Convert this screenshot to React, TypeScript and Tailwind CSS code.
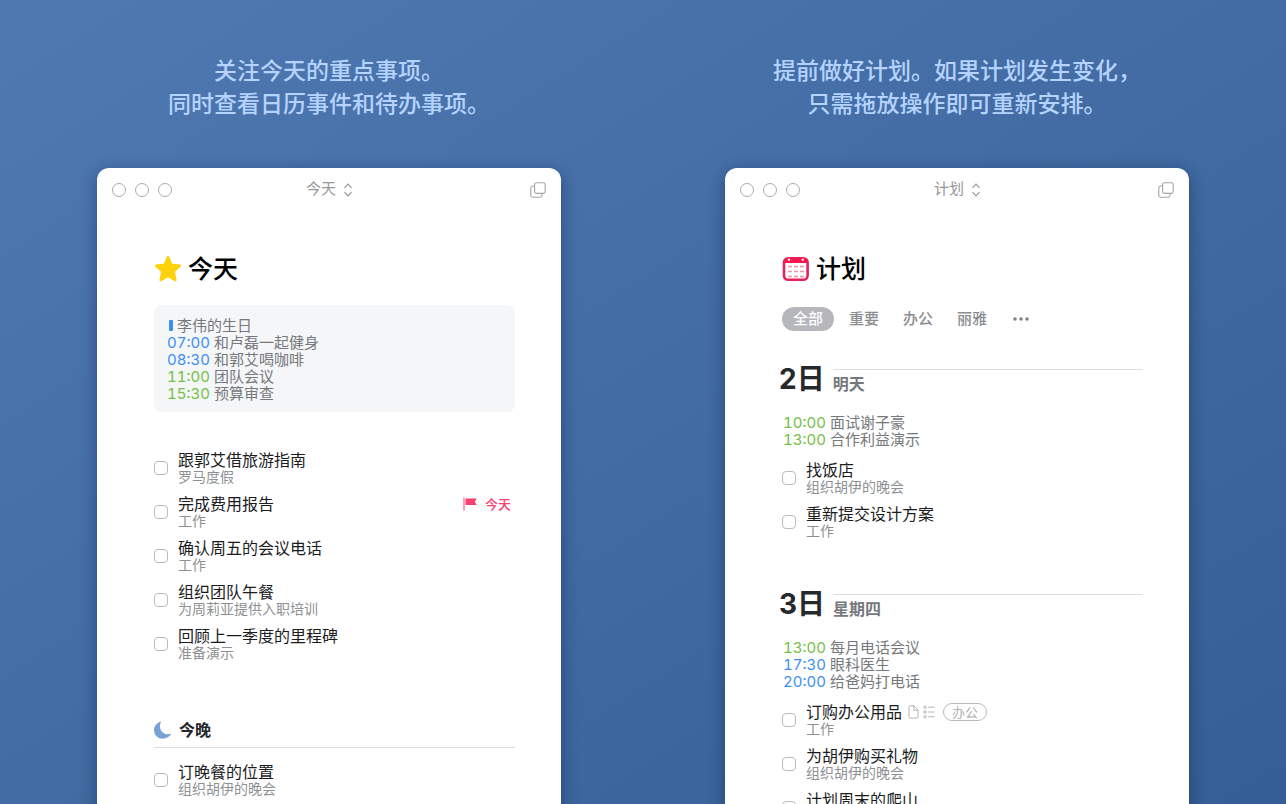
import { useState } from 'react'
import type { ReactNode } from 'react'

type CalendarEvent = {
  time?: string
  title: string
  color: 'blue' | 'green'
}

type Task = {
  title: string
  project?: string
  deadline?: string
  hasNotes?: boolean
  hasChecklist?: boolean
  tag?: string
}

const todayEvents: CalendarEvent[] = [
  { title: '李伟的生日', color: 'blue' },
  { time: '07:00', title: '和卢磊一起健身', color: 'blue' },
  { time: '08:30', title: '和郭艾喝咖啡', color: 'blue' },
  { time: '11:00', title: '团队会议', color: 'green' },
  { time: '15:30', title: '预算审查', color: 'green' },
]

const todayTasks: Task[] = [
  { title: '跟郭艾借旅游指南', project: '罗马度假' },
  { title: '完成费用报告', project: '工作', deadline: '今天' },
  { title: '确认周五的会议电话', project: '工作' },
  { title: '组织团队午餐', project: '为周莉亚提供入职培训' },
  { title: '回顾上一季度的里程碑', project: '准备演示' },
]

const eveningTasks: Task[] = [{ title: '订晚餐的位置', project: '组织胡伊的晚会' }]

const days: { day: string; label: string; events: CalendarEvent[]; tasks: Task[] }[] = [
  {
    day: '2',
    label: '明天',
    events: [
      { time: '10:00', title: '面试谢子豪', color: 'green' },
      { time: '13:00', title: '合作利益演示', color: 'green' },
    ],
    tasks: [
      { title: '找饭店', project: '组织胡伊的晚会' },
      { title: '重新提交设计方案', project: '工作' },
    ],
  },
  {
    day: '3',
    label: '星期四',
    events: [
      { time: '13:00', title: '每月电话会议', color: 'green' },
      { time: '17:30', title: '眼科医生', color: 'blue' },
      { time: '20:00', title: '给爸妈打电话', color: 'blue' },
    ],
    tasks: [
      { title: '订购办公用品', project: '工作', hasNotes: true, hasChecklist: true, tag: '办公' },
      { title: '为胡伊购买礼物', project: '组织胡伊的晚会' },
      { title: '计划周末的爬山' },
    ],
  },
]

const filters = ['全部', '重要', '办公', '丽雅']

function StarIcon() {
  return (
    <svg width="28" height="28" viewBox="0 0 28 28" aria-hidden="true">
      <path
        d="M14 2l3.300 7.700 8.600.9-6.200 5.800 1.700 8.800L14 21l-7.400 4.200 1.700-8.800L2.100 10.600l8.600-.9z"
        fill="#fed30d"
        stroke="#fed30d"
        strokeWidth="2.400"
        strokeLinejoin="round"
      />
    </svg>
  )
}

function CalendarIcon() {
  return (
    <svg width="28" height="28" viewBox="0 0 28 28" aria-hidden="true">
      <rect x="2" y="3.200" width="23.600" height="21.600" rx="4.400" fill="#fff" stroke="#e8205c" strokeWidth="2.600" />
      <path d="M2 8V7a4 4 0 0 1 4-4h15.600a4 4 0 0 1 4 4v1z" fill="#f5174f" />
      <circle cx="7" cy="4.600" r="1.200" fill="#fff" />
      <circle cx="20.800" cy="4.600" r="1.200" fill="#fff" />
      <path
        d="M6 11.500h4M12 11.500h4M18 11.500h4M6 16.500h4M12 16.500h4M18 16.500h4M6 21.500h4M12 21.500h4M18 21.500h4"
        stroke="#f58fa9"
        strokeWidth="1.600"
      />
    </svg>
  )
}

function MoonIcon() {
  return (
    <svg width="18" height="18" viewBox="0 0 18 18" aria-hidden="true">
      <path
        d="M7 .4C2.900 1.600 0 5 0 9.200A8.600 8.600 0 0 0 8.600 17.800c3.800 0 7.100-2 8.700-5.200-1.200.4-2.200.6-3.400.6C9.600 13.200 6 9.800 6 5.400 6 3.500 6.300 1.900 7 .4z"
        fill="#78a1d6"
      />
    </svg>
  )
}

function FlagIcon() {
  return (
    <svg width="14" height="14" viewBox="0 0 14 14" aria-hidden="true">
      <path d="M1 .5v13" stroke="#f9416f" strokeWidth="1" />
      <path d="M2.500 1.500h11.300l-2 3.200 2 3.300H2.500z" fill="#f9416f" />
    </svg>
  )
}

function NoteIcon() {
  return (
    <svg width="11" height="14" viewBox="0 0 11 14" fill="none" stroke="#b4b6b9" strokeWidth="1" aria-hidden="true">
      <path d="M1 1.500a.8.8 0 0 1 .8-.8H6l4 4.300v7.200a.8.8 0 0 1-.8.8H1.800a.8.8 0 0 1-.8-.8zM5.800.8v4.400h4.100" />
    </svg>
  )
}

function ChecklistIcon() {
  return (
    <svg width="12" height="14" viewBox="0 0 12 14" fill="none" stroke="#b4b6b9" strokeWidth="1" aria-hidden="true">
      <circle cx="2" cy="2.200" r="1.200" />
      <circle cx="2" cy="7" r="1.200" />
      <circle cx="2" cy="11.800" r="1.200" />
      <path d="M5 2.200h6.500M5 7h6.500M5 11.800h6.500" />
    </svg>
  )
}

function EventList({ events }: { events: CalendarEvent[] }) {
  return (
    <ul className="text-[15px] leading-[17px] text-[#75787c]">
      {events.map((event) => (
        <li key={event.title} className="flex items-center">
          {event.time ? (
            <time className={`mr-1 tabular-nums ${event.color === 'blue' ? 'text-[#3c8ff0]' : 'text-[#72c044]'}`}>
              {event.time}
            </time>
          ) : (
            <span className="ml-0.5 mr-1 h-[11px] w-1 rounded-[1px] bg-[#3c8ff0]" />
          )}
          {event.title}
        </li>
      ))}
    </ul>
  )
}

function TaskRow({ task }: { task: Task }) {
  return (
    <li>
      <label className="flex min-h-[34px] items-center gap-2.5">
        <input
          type="checkbox"
          className="size-3.5 shrink-0 appearance-none rounded-[4px] border border-[#b9bbbd] bg-white checked:bg-[#3c8ff0]"
        />
        <span className="flex min-h-[34px] flex-1 flex-col">
          <span className="flex h-[18px] items-center text-base leading-[18px] text-[#1b1c1e]">
            {task.title}
            {task.hasNotes && <span className="ml-1.5"><NoteIcon /></span>}
            {task.hasChecklist && <span className="ml-1"><ChecklistIcon /></span>}
            {task.tag && (
              <span className="ml-2 rounded-full border border-[#b9bbbd] px-2 text-[13px] leading-4 text-[#b0b2b5]">
                {task.tag}
              </span>
            )}
            {task.deadline && (
              <span className="ml-auto mr-1 flex items-center gap-2 text-[13px] font-medium text-[#f9416f]">
                <FlagIcon />
                {task.deadline}
              </span>
            )}
          </span>
          {task.project && <span className="text-sm leading-4 text-[#8e9194]">{task.project}</span>}
        </span>
      </label>
    </li>
  )
}

function TaskList({ tasks }: { tasks: Task[] }) {
  return (
    <ul className="space-y-2.5">
      {tasks.map((task) => (
        <TaskRow key={task.title} task={task} />
      ))}
    </ul>
  )
}

function Window({ title, icon, children }: { title: string; icon: ReactNode; children: ReactNode }) {
  return (
    <div className="flex-1 rounded-t-xl bg-white shadow-[0_4px_16px_rgba(10,30,70,0.45)]">
      <div className="grid h-[43px] grid-cols-3 items-center px-[15px]">
        <div className="flex gap-[9px]">
          <button type="button" aria-label="关闭" className="size-3.5 rounded-full border border-[#a9abad]" />
          <button type="button" aria-label="最小化" className="size-3.5 rounded-full border border-[#a9abad]" />
          <button type="button" aria-label="缩放" className="size-3.5 rounded-full border border-[#a9abad]" />
        </div>
        <button type="button" className="flex items-center justify-center gap-2 text-[15px] text-[#96989b]">
          {title}
          <svg width="8" height="14" viewBox="0 0 8 14" fill="none" stroke="#96989b" strokeWidth="1.200" aria-hidden="true">
            <path d="M.5 4.800L4 1.200l3.500 3.600M.5 9.200L4 12.800l3.500-3.600" />
          </svg>
        </button>
        <button type="button" aria-label="新窗口" className="justify-self-end">
          <svg width="16" height="16" viewBox="0 0 16 16" fill="none" stroke="#a3a5a7" strokeWidth="1.100" aria-hidden="true">
            <rect x="4.600" y=".8" width="10.600" height="10.600" rx="1.800" />
            <path d="M4.600 4H2.600A1.800 1.800 0 0 0 .8 5.800v7.600a1.800 1.800 0 0 0 1.800 1.800h7.600a1.800 1.800 0 0 0 1.800-1.800v-2" />
          </svg>
        </button>
      </div>
      <div className="pl-[57px] pr-[46px] pt-10">
        <h2 className="flex items-center gap-1.5 text-[25px] font-medium leading-9 text-black">
          {icon}
          {title}
        </h2>
        {children}
      </div>
    </div>
  )
}

function TodayContent() {
  return (
    <>
      <div className="mt-[18px] rounded-lg bg-[#f5f6f8] pb-2.5 pl-[13px] pt-3">
        <EventList events={todayEvents} />
      </div>
      <div className="mt-[39px]">
        <TaskList tasks={todayTasks} />
      </div>
      <h3 className="mb-[15px] mt-[57px] flex items-center gap-[7px] border-b border-[#dcdee0] pb-[5px] text-base font-bold leading-6 text-[#26282b]">
        <MoonIcon />
        今晚
      </h3>
      <TaskList tasks={eveningTasks} />
    </>
  )
}

function PlanContent() {
  const [filter, setFilter] = useState('全部')

  return (
    <>
      <div className="mt-5 flex gap-1.5 text-[15px] font-medium leading-6">
        {filters.map((name) => (
          <button
            key={name}
            type="button"
            onClick={() => setFilter(name)}
            className={name === filter ? 'rounded-full bg-[#b5b7ba] px-[11px] text-white' : 'rounded-full px-[9px] text-[#8b8e91]'}
          >
            {name}
          </button>
        ))}
        <button type="button" aria-label="更多" className="px-[11px]">
          <svg width="16" height="4" viewBox="0 0 16 4" fill="#808386" aria-hidden="true">
            <circle cx="2" cy="2" r="1.800" />
            <circle cx="8" cy="2" r="1.800" />
            <circle cx="14" cy="2" r="1.800" />
          </svg>
        </button>
      </div>
      <div className="mt-[30px] space-y-[47px]">
        {days.map((item) => (
          <section key={item.day}>
            <h3 className="-ml-[3px] flex gap-2 font-bold">
              <span className="text-[28px] leading-9 text-[#26282b]">{item.day}日</span>
              <span className="mt-2 flex-1 border-t border-[#dcdee0] pt-1 text-base leading-5 text-[#75787c]">
                {item.label}
              </span>
            </h3>
            <div className="mb-[13px] mt-[17px] pl-px">
              <EventList events={item.events} />
            </div>
            <TaskList tasks={item.tasks} />
          </section>
        ))}
      </div>
    </>
  )
}

export default function App() {
  return (
    <main className="grid h-screen grid-cols-2 gap-[164px] overflow-hidden bg-linear-to-br from-[#5079b2] to-[#345f94] px-[97px] pt-[55px] font-['Inter','Noto_Sans_CJK_SC',sans-serif]">
      <section className="flex flex-col">
        <p className="mb-[47px] whitespace-nowrap text-center text-[23px] font-medium leading-[33px] text-[#b4d3ff]">
          关注今天的重点事项。
          <br />
          同时查看日历事件和待办事项。
        </p>
        <Window title="今天" icon={<StarIcon />}>
          <TodayContent />
        </Window>
      </section>
      <section className="flex flex-col">
        <p className="mb-[47px] whitespace-nowrap text-center text-[23px] font-medium leading-[33px] text-[#b4d3ff]">
          提前做好计划。如果计划发生变化，
          <br />
          只需拖放操作即可重新安排。
        </p>
        <Window title="计划" icon={<CalendarIcon />}>
          <PlanContent />
        </Window>
      </section>
    </main>
  )
}
